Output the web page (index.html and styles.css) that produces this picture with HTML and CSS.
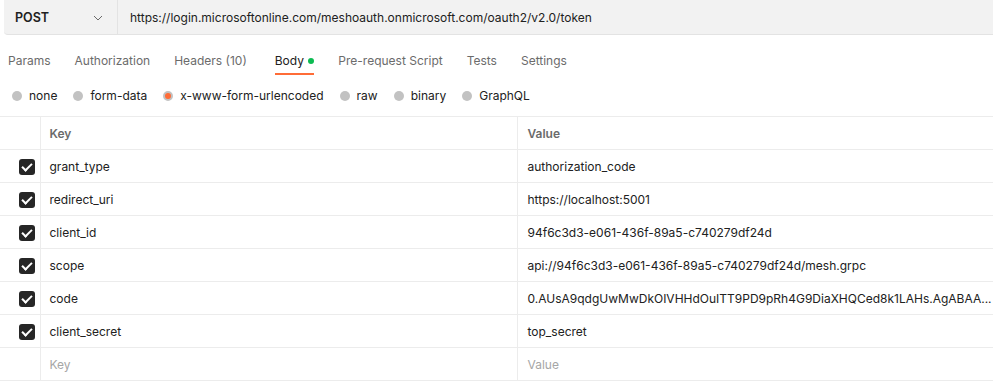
FILE: index.html
```html
<!DOCTYPE html>
<html lang="en">
<head>
  <meta charset="UTF-8" />
  <title>Token request</title>
  <link rel="stylesheet" href="styles.css">
</head>
<body>

<!-- Request bar -->
<div class="request-bar">
  <div class="method">
    <span>POST</span>
    <svg class="chevron" width="10" height="6" viewBox="0 0 10 6"><path d="M1 1l4 4 4-4" fill="none" stroke="#6b6b6b" stroke-width="1"/></svg>
  </div>
  <div class="url">https://login.microsoftonline.com/meshoauth.onmicrosoft.com/oauth2/v2.0/token</div>
</div>

<!-- Tabs -->
<div class="tabs">
  <div class="tab">Params</div>
  <div class="tab">Authorization</div>
  <div class="tab headers">Headers <span class="count">(10)</span></div>
  <div class="tab active">Body <span class="dot"></span></div>
  <div class="tab">Pre-request Script</div>
  <div class="tab">Tests</div>
  <div class="tab">Settings</div>
</div>

<!-- Body types -->
<div class="body-types">
  <label class="radio"><span class="circle"></span>none</label>
  <label class="radio"><span class="circle"></span>form-data</label>
  <label class="radio checked"><span class="circle"></span>x-www-form-urlencoded</label>
  <label class="radio"><span class="circle"></span>raw</label>
  <label class="radio"><span class="circle"></span>binary</label>
  <label class="radio"><span class="circle"></span>GraphQL</label>
</div>

<!-- Params table -->
<table class="kv">
  <tr class="head">
    <th class="check-col"></th>
    <th class="key-col">Key</th>
    <th>Value</th>
  </tr>
  <tr>
    <td class="check-col"><span class="checkbox"></span></td>
    <td>grant_type</td>
    <td>authorization_code</td>
  </tr>
  <tr>
    <td class="check-col"><span class="checkbox"></span></td>
    <td>redirect_uri</td>
    <td>https://localhost:5001</td>
  </tr>
  <tr>
    <td class="check-col"><span class="checkbox"></span></td>
    <td>client_id</td>
    <td>94f6c3d3-e061-436f-89a5-c740279df24d</td>
  </tr>
  <tr>
    <td class="check-col"><span class="checkbox"></span></td>
    <td>scope</td>
    <td>api://94f6c3d3-e061-436f-89a5-c740279df24d/mesh.grpc</td>
  </tr>
  <tr>
    <td class="check-col"><span class="checkbox"></span></td>
    <td>code</td>
    <td>0.AUsA9qdgUwMwDkOIVHHdOuITT9PD9pRh4G9DiaXHQCed8k1LAHs.AgABAA...</td>
  </tr>
  <tr>
    <td class="check-col"><span class="checkbox"></span></td>
    <td>client_secret</td>
    <td>top_secret</td>
  </tr>
  <tr class="placeholder">
    <td class="check-col"></td>
    <td>Key</td>
    <td>Value</td>
  </tr>
</table>

</body>
</html>
```

FILE: styles.css
```css
body {
  margin: 0;
  font-family: Inter, 'Liberation Sans', sans-serif;
  font-size: 12px;
  color: #212121;
  background: #fff;
  overflow: hidden;
}

.request-bar {
  display: flex;
  height: 34px;
  margin-left: 4px;
  background: #f2f2f2;
  border-bottom: 1px solid #e3e3e3;
  border-radius: 0 0 0 4px;
}

.method {
  width: 114px;
  display: flex;
  align-items: center;
  justify-content: space-between;
  padding: 0 14px 0 11px;
  box-sizing: border-box;
  border-right: 1px solid #e3e3e3;
  font-weight: 600;
  color: #212121;
  font-size: 12.5px;
}

.chevron {
  margin-top: 1px;
}

.url {
  display: flex;
  align-items: center;
  padding-left: 12px;
  color: #212121;
}

.tabs {
  display: flex;
  gap: 24px;
  padding-left: 8px;
  height: 40px;
}

.tab {
  padding-top: 19px;
  line-height: 14px;
  height: 40px;
  box-sizing: border-box;
  color: #6b6b6b;
  border-bottom: 2px solid transparent;
}

.tab.headers {
  padding-right: 4px;
}

.tab.active {
  color: #212121;
  border-bottom-color: #ff6c37;
}

.dot {
  display: inline-block;
  width: 6px;
  height: 6px;
  border-radius: 50%;
  background: #0cbb52;
  vertical-align: middle;
  margin-left: 1px;
  margin-bottom: 2px;
}

.body-types {
  display: flex;
  align-items: center;
  height: 41px;
  padding-left: 12px;
  gap: 16px;
}

.radio {
  display: flex;
  align-items: center;
  gap: 7px;
  color: #212121;
}

.circle {
  width: 10px;
  height: 10px;
  border-radius: 50%;
  background: #c2c2c2;
  box-sizing: border-box;
}

.radio.checked .circle {
  background: #ff6c37;
  border: 2px solid #c2c2c2;
}

.kv {
  border-collapse: collapse;
  width: 1010px;
  table-layout: fixed;
}

.kv th,
.kv td {
  height: 33px;
  padding: 0 0 0 10px;
  border-top: 1px solid #ececec;
  border-bottom: 1px solid #ececec;
  border-left: 1px solid #ececec;
  text-align: left;
  white-space: nowrap;
  overflow: hidden;
  box-sizing: border-box;
}

.kv th {
  font-weight: 600;
  color: #6b6b6b;
}

.kv .check-col {
  width: 40px;
  padding: 0;
  border-left: none;
  text-align: center;
}

.kv .key-col {
  width: 477px;
}

.kv td:nth-child(2),
.kv th:nth-child(2) {
  padding-left: 9px;
}

.checkbox {
  display: inline-block;
  width: 16px;
  height: 16px;
  border-radius: 3px;
  background: #262626;
  position: relative;
  vertical-align: middle;
  margin-left: 14px;
  margin-top: 1px;
}

.checkbox::after {
  content: "";
  position: absolute;
  left: 5px;
  top: 2px;
  width: 4px;
  height: 8px;
  border: solid #fff;
  border-width: 0 2px 2px 0;
  transform: rotate(45deg);
}

.placeholder td {
  color: #a6a6a6;
}
```
